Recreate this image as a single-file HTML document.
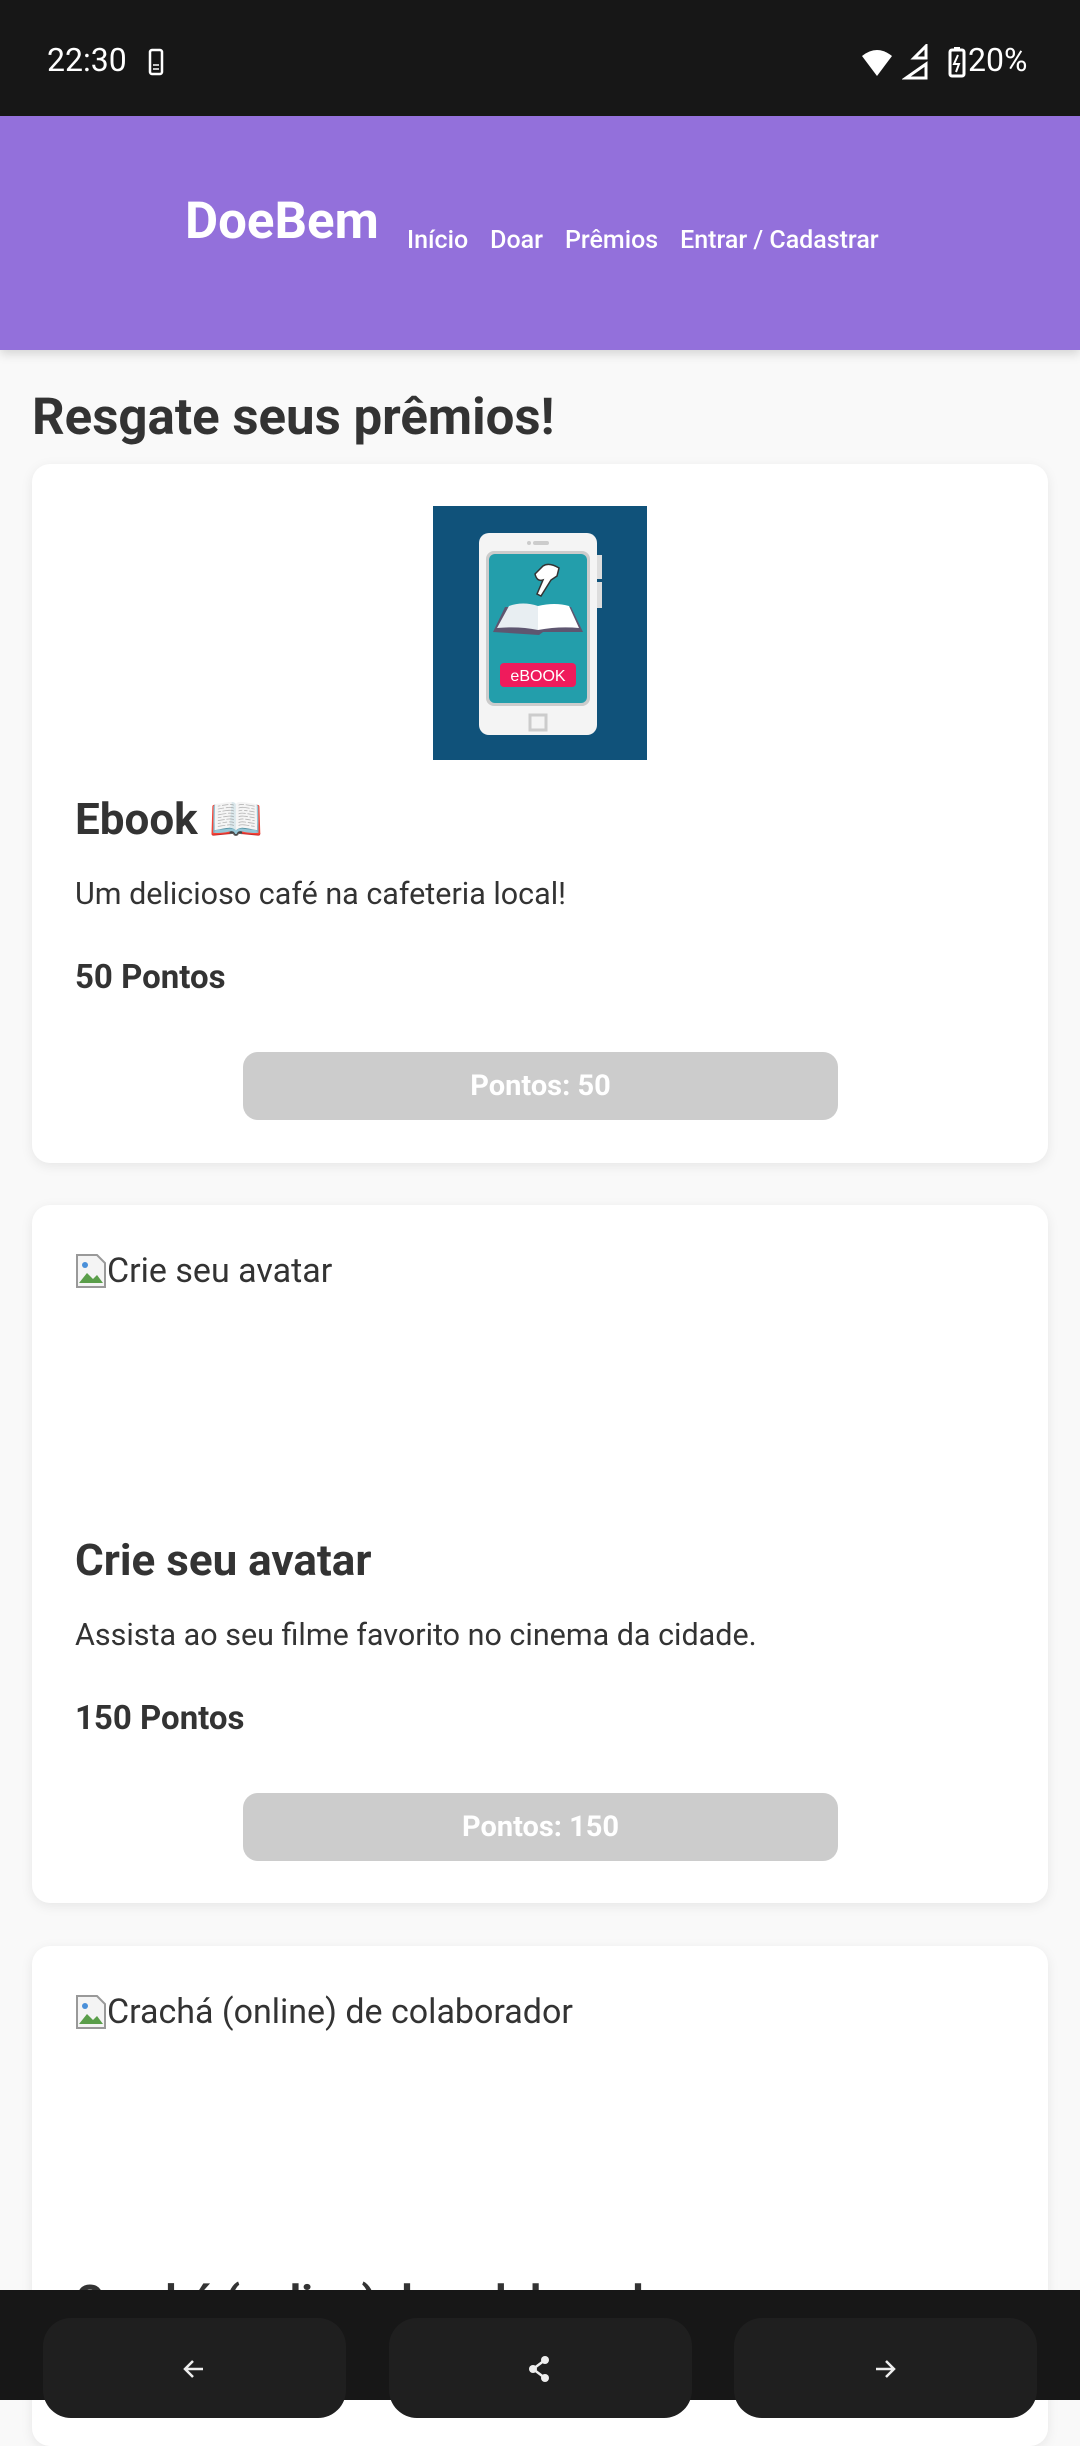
<!DOCTYPE html>
<html><head><meta charset="utf-8"><style>
*{margin:0;padding:0;box-sizing:border-box}
body{width:1080px;height:2400px;overflow:hidden;background:#f9f9f9;font-family:"Roboto","Liberation Sans",sans-serif;color:#333;position:relative}
.abs{position:absolute}
.status{left:0;top:0;width:1080px;height:116px;background:#171717;color:#fff}
.header{left:0;top:116px;width:1080px;height:234px;background:#9370db;box-shadow:0 4px 10px rgba(0,0,0,.15)}
.card{left:32px;width:1016px;background:#fff;border-radius:18px;box-shadow:0 3px 12px rgba(0,0,0,.08)}
.t{position:absolute;left:43px;font-weight:bold;font-size:44px;white-space:nowrap}
.d{position:absolute;left:43px;font-size:30.5px;white-space:nowrap}
.p{position:absolute;left:43px;font-size:33px;font-weight:bold;white-space:nowrap}
.btn{position:absolute;left:211px;width:595px;height:68px;background:#ccc;border-radius:15px;color:#fff;font-weight:bold;font-size:29px;text-align:center;line-height:68px}
.alt{position:absolute;left:43px;font-size:34px;white-space:nowrap;display:flex;align-items:center}
.nav{left:0;top:2290px;width:1080px;height:110px;background:#171717}
.nb{position:absolute;top:28px;width:303px;height:100px;background:#1f1f1f;border-radius:28px}
.menu span{margin-right:22px}
</style></head><body>
<div class="abs status">
<div class="abs" style="left:47px;top:41px;font-size:32px">22:30</div>
<svg class="abs" style="left:148px;top:48px" width="16" height="28" viewBox="0 0 16 28"><rect x="2" y="2" width="12" height="24" rx="2" fill="none" stroke="#fff" stroke-width="2.5"/><path d="M5 17h6M5 21h6" stroke="#fff" stroke-width="1.5"/></svg>
<svg class="abs" style="left:860px;top:48px" width="34" height="30" viewBox="0 0 34 30"><path d="M2 8Q17-4 32 8L17 28Z" fill="#fff"/></svg>
<svg class="abs" style="left:902px;top:44px" width="26" height="36" viewBox="0 0 26 36"><path d="M24 2V14L12 14Z M24 20V34H4Z" fill="none" stroke="#fff" stroke-width="3"/></svg>
<svg class="abs" style="left:948px;top:46px" width="18" height="32" viewBox="0 0 18 32"><rect x="2" y="4" width="14" height="26" rx="2" fill="none" stroke="#fff" stroke-width="3"/><rect x="6" y="1" width="6" height="4" fill="#fff"/><path d="M10 9L6 18h5l-3 8" stroke="#fff" stroke-width="2" fill="none"/></svg>
<div class="abs" style="left:968px;top:41px;font-size:32px">20%</div>
</div>
<div class="abs header">
<div class="abs" style="left:185px;top:76px;font-size:51px;font-weight:bold;color:#fff">DoeBem</div>
<div class="abs menu" style="left:407px;top:110px;font-size:25px;color:#fff;font-weight:500;white-space:nowrap"><span>Início</span><span>Doar</span><span>Prêmios</span><span>Entrar / Cadastrar</span></div>
</div>
<div class="abs" style="left:32px;top:388px;font-size:51px;font-weight:bold">Resgate seus prêmios!</div>

<div class="abs card" style="top:464px;height:699px">
<svg class="abs" style="left:401px;top:42px" width="214" height="254" viewBox="0 0 214 254">
<rect width="214" height="254" fill="#10527a"/>
<rect x="46" y="27" width="118" height="202" rx="10" fill="#f4f4f4"/>
<rect x="164" y="49" width="5" height="24" fill="#ddd"/><rect x="164" y="76" width="5" height="26" fill="#ddd"/>
<circle cx="96" cy="37" r="2" fill="#ccc"/><rect x="100" y="35" width="16" height="4" rx="2" fill="#ccc"/>
<rect x="53" y="45" width="104" height="155" rx="8" fill="#ccc"/>
<rect x="56" y="48" width="98" height="149" rx="6" fill="#239eab"/>
<path d="M60 126L72 101H104L138 101L150 126H110L106 129Z" fill="#5e5670"/>
<path d="M64 122L76 100Q90 95 105 100V124Q86 120 64 122Z" fill="#e8eef2"/>
<path d="M105 100Q122 96 136 100L146 122Q126 120 105 124Z" fill="#fff"/>
<path d="M102 68L110 60Q116 56 126 62L124 70L118 74L108 90L104 88L110 74Q104 76 102 68Z" fill="#fff" stroke="#333" stroke-width="1.5"/>
<rect x="67" y="157" width="76" height="24" rx="4" fill="#ef1b5c"/>
<text x="105" y="175" font-size="16" text-anchor="middle" fill="#fff" font-family="Liberation Sans">eBOOK</text>
<rect x="97" y="209" width="16" height="15" fill="none" stroke="#ccc" stroke-width="3"/>
</svg>
<div class="t" style="top:329px">Ebook 📖</div>
<div class="d" style="top:413px">Um delicioso café na cafeteria local!</div>
<div class="p" style="top:494px">50 Pontos</div>
<div class="btn" style="top:588px">Pontos: 50</div>
</div>

<div class="abs card" style="top:1205px;height:698px">
<div class="alt" style="top:46px"><svg width="32" height="36" viewBox="0 0 32 36"><path d="M2 2h20l8 8v24H2Z" fill="#f4f4f4" stroke="#999" stroke-width="2"/><path d="M4 30l8-10 6 6 4-4 6 8Z" fill="#5a9e4a"/><circle cx="10" cy="12" r="3" fill="#4a90d9"/></svg>Crie seu avatar</div>
<div class="t" style="top:329px">Crie seu avatar</div>
<div class="d" style="top:413px">Assista ao seu filme favorito no cinema da cidade.</div>
<div class="p" style="top:494px">150 Pontos</div>
<div class="btn" style="top:588px">Pontos: 150</div>
</div>

<div class="abs card" style="top:1946px;height:500px">
<div class="alt" style="top:46px"><svg width="32" height="36" viewBox="0 0 32 36"><path d="M2 2h20l8 8v24H2Z" fill="#f4f4f4" stroke="#999" stroke-width="2"/><path d="M4 30l8-10 6 6 4-4 6 8Z" fill="#5a9e4a"/><circle cx="10" cy="12" r="3" fill="#4a90d9"/></svg>Crachá (online) de colaborador</div>
<div class="t" style="top:329px">Crachá (online) de colaborador</div>
</div>

<div class="abs nav">
<div class="nb" style="left:43px"><svg class="abs" style="left:136px;top:36px" width="30" height="30" viewBox="0 0 30 30"><path d="M24 15H7M14 7l-8 8 8 8" stroke="#eee" stroke-width="2.5" fill="none"/></svg></div>
<div class="nb" style="left:389px"><svg class="abs" style="left:136px;top:36px" width="30" height="30" viewBox="0 0 30 30"><circle cx="20" cy="6" r="4" fill="#eee"/><circle cx="8" cy="15" r="4" fill="#eee"/><circle cx="20" cy="24" r="4" fill="#eee"/><path d="M20 6L8 15 20 24" stroke="#eee" stroke-width="2.5" fill="none"/></svg></div>
<div class="nb" style="left:734px"><svg class="abs" style="left:136px;top:36px" width="30" height="30" viewBox="0 0 30 30"><path d="M6 15H23M16 7l8 8-8 8" stroke="#eee" stroke-width="2.5" fill="none"/></svg></div>
</div>
</body></html>
